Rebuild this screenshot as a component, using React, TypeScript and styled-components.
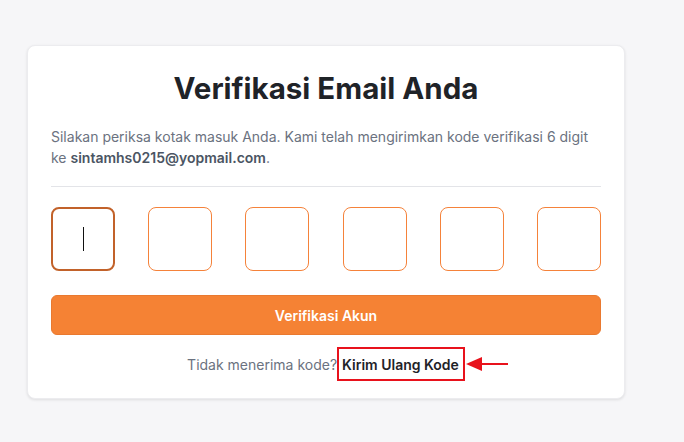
import React from 'react';
import styled, { createGlobalStyle } from 'styled-components';

const GlobalStyle = createGlobalStyle`
  body {
    margin: 0;
    background: #f6f6f8;
    font-family: Inter, "Noto Sans", sans-serif;
  }
`;

const Page = styled.div`
  padding: 45px 0 40px 27px;
`;

const Card = styled.div`
  width: 598px;
  box-sizing: border-box;
  background: #fff;
  border: 1px solid #ececef;
  border-radius: 8px;
  box-shadow: 0 1px 3px rgba(0, 0, 0, 0.1);
  padding: 22px 23px 17px;
`;

const Title = styled.h1`
  margin: 0;
  text-align: center;
  font-size: 29.5px;
  line-height: 40px;
  font-weight: 700;
  color: #1f2328;
`;

const Lead = styled.p`
  margin: 18px 0 0;
  font-size: 14px;
  line-height: 21px;
  color: #6b7280;

  strong {
    color: #4b5563;
    font-weight: 600;
  }
`;

const Divider = styled.hr`
  margin: 18px 0 20px;
  border: none;
  border-top: 1px solid #e3e4e8;
`;

const CodeRow = styled.div`
  display: flex;
  justify-content: space-between;
`;

const CodeBox = styled.div<{ $active?: boolean }>`
  width: 64px;
  height: 64px;
  box-sizing: border-box;
  border-radius: 8px;
  border: ${p => (p.$active ? '2px solid #c2622a' : '1px solid #f5823a')};
  display: flex;
  align-items: center;
  justify-content: center;
`;

const Caret = styled.span`
  width: 1px;
  height: 24px;
  background: #111;
`;

const SubmitButton = styled.button`
  margin-top: 24px;
  width: 100%;
  height: 40px;
  border: 1px solid #e9792f;
  border-radius: 6px;
  background: #f58234;
  color: #fff;
  font-family: inherit;
  font-size: 14px;
  font-weight: 600;
  cursor: pointer;
`;

const Footer = styled.div`
  margin-top: 12px;
  text-align: center;
  font-size: 14px;
  color: #6b7280;
`;

const ResendLink = styled.span`
  position: relative;
  display: inline-block;
  padding: 7px 4px 6px 3px;
  border: 2px solid #e8121c;
  color: #1f2328;
  font-weight: 600;
`;

const Arrow = styled.svg`
  position: absolute;
  left: 100%;
  top: 50%;
  margin-top: -7px;
  margin-left: 3px;
`;

export default function App() {
  return (
    <>
      <GlobalStyle />
      <Page>
        <Card>
          <Title>Verifikasi Email Anda</Title>
          <Lead>
            Silakan periksa kotak masuk Anda. Kami telah mengirimkan kode verifikasi 6 digit ke{' '}
            <strong>sintamhs0215@yopmail.com</strong>.
          </Lead>
          <Divider />
          <CodeRow>
            {[0, 1, 2, 3, 4, 5].map(i => (
              <CodeBox key={i} $active={i === 0}>
                {i === 0 && <Caret />}
              </CodeBox>
            ))}
          </CodeRow>
          <SubmitButton type="button">Verifikasi Akun</SubmitButton>
          <Footer>
            Tidak menerima kode?
            <ResendLink>
              Kirim Ulang Kode
              <Arrow width="42" height="14" viewBox="0 0 42 14">
                <polygon points="0,7 16,0 16,14" fill="#e8121c" />
                <rect x="14" y="6" width="28" height="2" fill="#e8121c" />
              </Arrow>
            </ResendLink>
          </Footer>
        </Card>
      </Page>
    </>
  );
}
